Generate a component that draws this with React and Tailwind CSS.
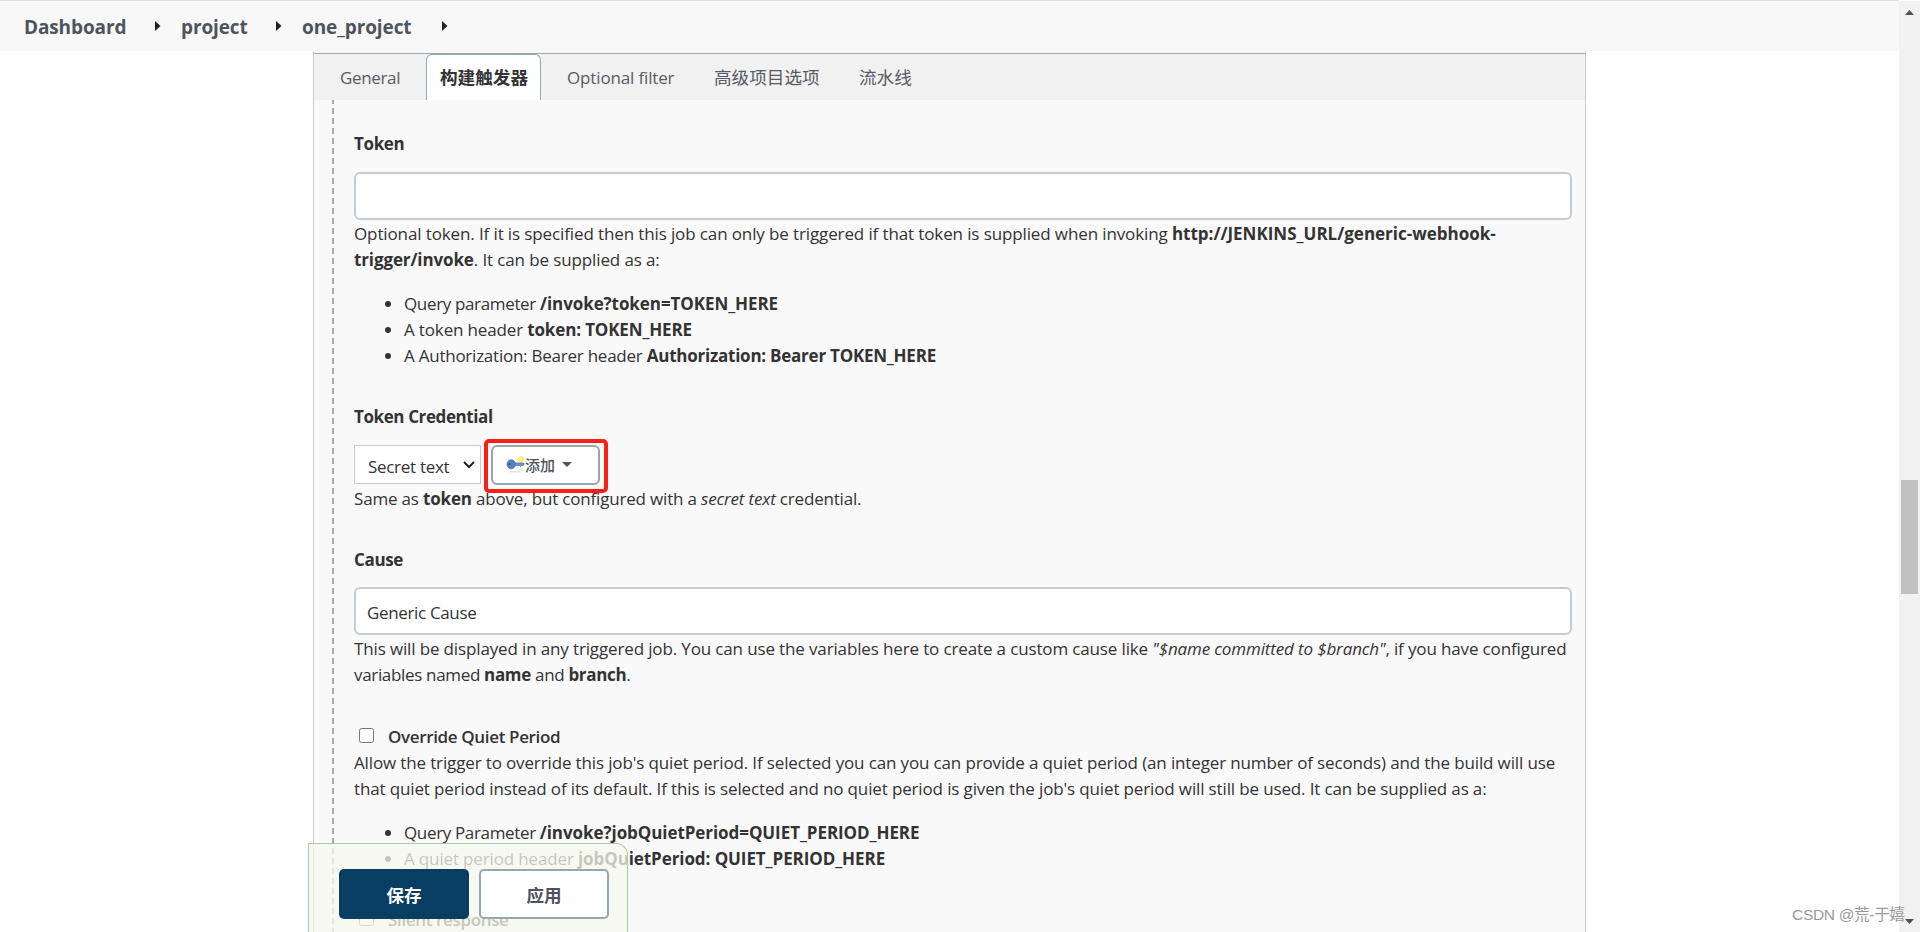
import { useState } from 'react';

const tabs = [
  { label: 'General', className: 'w-[112px] pl-[26px] pt-[2px]' },
  { label: '构建触发器', className: 'w-[115px] pl-[13px]', active: true },
  { label: 'Optional filter', className: 'w-[147px] pl-[26px] pt-[2px] tracking-[-0.15px]' },
  { label: '高级项目选项', className: 'w-[145px] pl-[26px] text-[17.6px] tracking-normal' },
  { label: '流水线', className: 'w-[100px] pl-[26px] text-[17.6px] tracking-normal' },
];

const Crumb = ({ children, className }) => (
  <li className={`flex items-center ${className}`}>
    <a href="#" className="shrink-0 whitespace-nowrap">{children}</a>
    <svg className="ml-auto mb-[2px] shrink-0" width="6" height="10" viewBox="0 0 6 10">
      <path d="M0 0L5.5 5L0 10Z" fill="#222" />
    </svg>
  </li>
);

const TextInput = ({ value, onChange }) => (
  <input
    type="text"
    value={value}
    onChange={(e) => onChange(e.target.value)}
    className="block h-12 w-[1218px] rounded-md border-2 border-[#c3ccd1] bg-white px-[11px] pt-[2px] tracking-[-0.35px] outline-none"
  />
);

const KeyIcon = () => (
  <svg className="-ml-px" width="20" height="18" viewBox="0 0 20 18">
    <ellipse cx="10" cy="15.8" rx="7" ry="0.8" fill="#e2e2e2" />
    <path d="M9 7H18.2L19.4 8.3L18.2 9.4H16.6L15.6 10.6L14.4 9.4H9Z" fill="#6f9bcb" stroke="#4577b0" strokeWidth="0.8" />
    <ellipse cx="6.2" cy="8.3" rx="4.2" ry="4.5" fill="#5584bb" stroke="#4272ab" strokeWidth="0.8" />
    <circle cx="4.6" cy="8.2" r="1.1" fill="#2c5388" />
    <circle cx="16" cy="3.2" r="2" fill="#fffde0" stroke="#fbf34a" strokeWidth="1.8" />
  </svg>
);

const App = () => {
  const [token, setToken] = useState('');
  const [cause, setCause] = useState('Generic Cause');
  const [override, setOverride] = useState(false);
  const [silent, setSilent] = useState(false);

  return (
    <div className="relative flex h-[932px] w-[1920px] overflow-hidden bg-white font-['Open_Sans','Noto_Sans_CJK_SC',sans-serif] text-[17px] leading-[26px] text-[#333]">
      <div className="flex w-[1899px] flex-col">
        {/* Breadcrumbs */}
        <ul className="flex h-[51px] shrink-0 items-center border-t border-[#dcdcdc] bg-[#f8f8f8] pl-[24px] pt-[2px] text-[19px] font-bold tracking-[-0.12px] text-[#4d545d]">
          <Crumb className="w-[137px]">Dashboard</Crumb>
          <Crumb className="ml-5 w-[101px]">project</Crumb>
          <Crumb className="ml-5 w-[146px]">one_project</Crumb>
        </ul>

        <main className="ml-[313px] flex w-[1273px] grow flex-col overflow-hidden border-x border-[#c3ccd1] bg-[#f9f9f9] pt-[2px]">
          {/* Tabs */}
          <nav className="flex h-[47px] shrink-0 border-t border-[#9aa8b2] bg-[#f1f1f1] tracking-[-0.35px] text-[#565c66]">
            {tabs.map((tab) => (
              <a
                key={tab.label}
                href="#"
                className={`flex items-center whitespace-nowrap ${tab.className} ${tab.active ? 'rounded-t-md border-x border-t border-[#9aa8b2] bg-white pb-[2px] text-[17.6px] font-bold tracking-normal text-[#333]' : ''}`}
              >
                {tab.label}
              </a>
            ))}
          </nav>

          {/* Trigger options */}
          <div className="grow overflow-hidden">
            <div className="-mt-[2px] ml-[18px] h-[846px] border-l-2 border-dashed border-[#aaa] pl-5 tracking-[-0.35px]">
              <div className="pt-[33px]">
                <label className="mb-[15px] block font-bold">Token</label>
                <TextInput value={token} onChange={setToken} />
                <p className="mt-[1px] whitespace-nowrap tracking-[-0.12px]">
                  Optional token. If it is specified then this job can only be triggered if that token is supplied when invoking <b className="tracking-normal">http://JENKINS_URL/generic-webhook-</b><br />
                  <b>trigger/invoke</b>. It can be supplied as a:
                </p>
                <ul className="mt-[18px] list-disc pl-[50px] tracking-[-0.35px]">
                  <li>Query parameter <b className="tracking-[-0.08px]">/invoke?token=TOKEN_HERE</b></li>
                  <li className="tracking-[-0.15px]">A token header <b>token: TOKEN_HERE</b></li>
                  <li className="tracking-[-0.24px]">A Authorization: Bearer header <b>Authorization: Bearer TOKEN_HERE</b></li>
                </ul>
              </div>

              <div className="pt-[35px]">
                <label className="mb-[15px] block font-bold tracking-[-0.4px]">Token Credential</label>
                <div className="flex h-10">
                  <button className="flex h-[39px] w-[127px] items-center border border-[#c3ccd1] bg-white pl-[13px] pt-[4px] tracking-[-0.3px]">
                    Secret text
                    <svg className="mb-[3px] ml-auto mr-[5px]" width="12" height="8" viewBox="0 0 12 8" fill="none" stroke="#222" strokeWidth="2">
                      <path d="M1 1L6 6L11 1" />
                    </svg>
                  </button>
                  <div className="relative ml-[10px]">
                    <button className="flex h-10 w-[109px] items-center rounded-md border-2 border-[#98a6ae] bg-white pl-[13px] text-[15px] font-medium tracking-normal text-[#4d545d]">
                      <KeyIcon />
                      添加
                      <svg className="mb-[2px] ml-[7px]" width="10" height="5" viewBox="0 0 10 5">
                        <path d="M0 0H10L5 5Z" fill="#4d545d" />
                      </svg>
                    </button>
                    <div className="pointer-events-none absolute -left-[7px] -top-[6px] h-[54px] w-[124px] rounded-[5px] border-4 border-[#fb2015]" />
                  </div>
                </div>
                <p className="mt-[1px] tracking-[-0.18px]">Same as <b>token</b> above, but configured with a <i>secret text</i> credential.</p>
              </div>

              <div className="pt-[35px]">
                <label className="mb-[14px] block font-bold">Cause</label>
                <TextInput value={cause} onChange={setCause} />
                <p className="mt-[1px] whitespace-nowrap tracking-[-0.14px]">
                  This will be displayed in any triggered job. You can use the variables here to create a custom cause like <i>"$name committed to $branch"</i>, if you have configured<br />
                  <span className="tracking-[-0.33px]">variables named <b>name</b> and <b>branch</b>.</span>
                </p>
              </div>

              <div className="pt-9">
                <label className="flex items-center font-semibold">
                  <input type="checkbox" checked={override} onChange={(e) => setOverride(e.target.checked)} className="mb-1 ml-[5px] mr-[14px] size-[15px]" />
                  Override Quiet Period
                </label>
                <p className="whitespace-nowrap tracking-[-0.14px]">
                  Allow the trigger to override this job's quiet period. If selected you can you can provide a quiet period (an integer number of seconds) and the build will use<br />
                  that quiet period instead of its default. If this is selected and no quiet period is given the job's quiet period will still be used. It can be supplied as a:
                </p>
                <ul className="mt-[18px] list-disc pl-[50px] tracking-[-0.35px]">
                  <li>Query Parameter <b className="tracking-[-0.07px]">/invoke?jobQuietPeriod=QUIET_PERIOD_HERE</b></li>
                  <li className="tracking-[-0.15px]">A quiet period header <b className="tracking-[-0.08px]">jobQuietPeriod: QUIET_PERIOD_HERE</b></li>
                </ul>
              </div>

              <label className="mt-[35px] flex items-center font-semibold">
                <input type="checkbox" checked={silent} onChange={(e) => setSilent(e.target.checked)} className="mb-1 ml-[5px] mr-[14px] size-[15px]" />
                Silent response
              </label>
            </div>
          </div>
        </main>
      </div>

      {/* Sticky save bar */}
      <div className="absolute bottom-0 left-[308px] flex h-[89px] w-[320px] gap-[10px] rounded-tr-xl border-l border-r border-t border-[#a9c9b6] bg-[#f5f8ec]/75 pl-[30px] pt-[25px] text-[17.6px] font-bold">
        <button className="h-[50px] w-[130px] rounded-[5px] bg-[#083e61] pt-[2px] text-white">保存</button>
        <button className="h-[50px] w-[130px] rounded-[5px] border-2 border-[#98a6ae] bg-white pt-[2px] text-[#4d545d]">应用</button>
      </div>

      {/* Scrollbar */}
      <div className="mt-px flex w-[21px] flex-col items-center bg-[#f1f1f1]">
        <svg className="mt-[9px] shrink-0" width="9" height="5" viewBox="0 0 9 5">
          <path d="M4.5 0L9 5H0Z" fill="#505050" />
        </svg>
        <div className="mt-[465px] h-[114px] w-[17px] shrink-0 bg-[#c1c1c1]" />
        <svg className="mb-2 mt-auto shrink-0" width="9" height="5" viewBox="0 0 9 5">
          <path d="M0 0H9L4.5 5Z" fill="#505050" />
        </svg>
      </div>

      <span className="absolute bottom-[5px] left-[1792px] whitespace-nowrap font-['Liberation_Sans','Noto_Sans_CJK_SC',sans-serif] text-[15.5px] leading-6 tracking-[-0.3px] text-[#999]">CSDN @荒-于嬉</span>
    </div>
  );
};

export default App;
